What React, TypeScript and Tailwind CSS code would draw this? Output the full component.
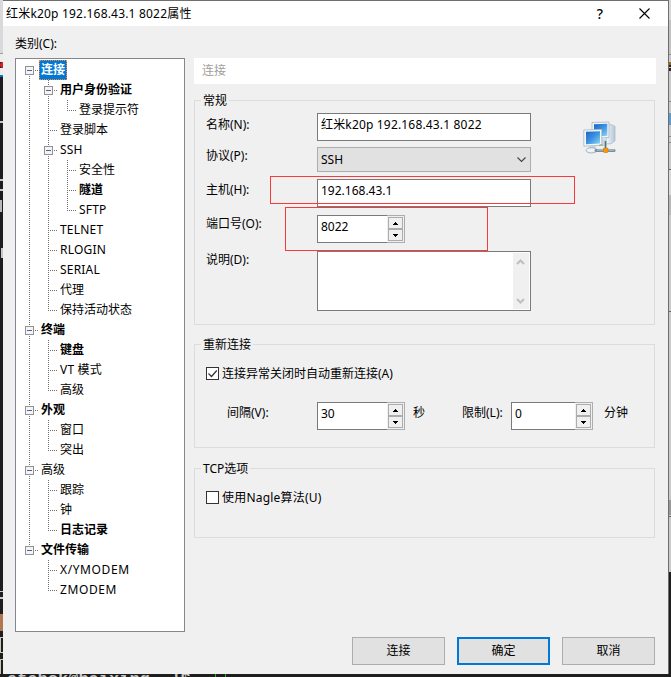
import { useState } from "react";
import type { ReactNode } from "react";
import clsx from "clsx";

type TreeItem = {
  label: string;
  bold?: boolean;
  wide?: boolean;
  children?: TreeItem[];
};

const CATEGORIES: TreeItem[] = [
  {
    label: "连接",
    children: [
      { label: "用户身份验证", bold: true, children: [{ label: "登录提示符" }] },
      { label: "登录脚本" },
      { label: "SSH", children: [{ label: "安全性" }, { label: "隧道", bold: true }, { label: "SFTP" }] },
      { label: "TELNET" },
      { label: "RLOGIN" },
      { label: "SERIAL" },
      { label: "代理" },
      { label: "保持活动状态" },
    ],
  },
  {
    label: "终端",
    bold: true,
    children: [{ label: "键盘", bold: true }, { label: "VT 模式" }, { label: "高级" }],
  },
  { label: "外观", bold: true, children: [{ label: "窗口" }, { label: "突出" }] },
  { label: "高级", children: [{ label: "跟踪" }, { label: "钟" }, { label: "日志记录", bold: true }] },
  {
    label: "文件传输",
    bold: true,
    children: [
      { label: "X/YMODEM", wide: true },
      { label: "ZMODEM", wide: true },
    ],
  },
];

type GuideProps = {
  up?: boolean;
  down?: boolean;
  branch?: boolean;
  box?: boolean;
};

// one 19px wide column of dotted tree lines
function Guide({ up, down, branch, box }: GuideProps) {
  return (
    <svg width="19" height="20" className="shrink-0" shapeRendering="crispEdges">
      <g stroke="#707070" strokeDasharray="1 1">
        {up && <path d="M9.5 0V11" />}
        {down && <path d="M9.5 10V20" />}
        {branch && <path d="M9 10.5H19" />}
      </g>
      {box && (
        <>
          <rect x="5.5" y="6.5" width="8" height="8" fill="#f4f4f4" stroke="#919191" />
          <path d="M7 10.5H12" stroke="#4b63a7" />
        </>
      )}
    </svg>
  );
}

function TreeRows({ items, trail = [] }: { items: TreeItem[]; trail?: boolean[] }) {
  return (
    <>
      {items.map((item, i) => {
        const last = i === items.length - 1;
        const selected = trail.length === 0 && i === 0;
        return (
          <div key={item.label}>
            <div className="flex h-5 items-center">
              {trail.map((open, n) => (
                <Guide key={n} up={open} down={open} />
              ))}
              <Guide up={trail.length > 0 || i > 0} down={!last} branch box={!!item.children} />
              <span
                className={clsx(
                  "h-5 leading-5",
                  selected ? "border border-dotted border-[#ff8728] bg-[#0078d7] px-px leading-[18px] text-white" : "pl-[2px]",
                  (item.bold || selected) && "font-bold",
                  item.wide ? "tracking-[0.6px]" : /^[A-Z]/.test(item.label) && "tracking-[0.2px]",
                )}
              >
                {item.label}
              </span>
            </div>
            {item.children && <TreeRows items={item.children} trail={[...trail, !last]} />}
          </div>
        );
      })}
    </>
  );
}

function Group({ title, className, children }: { title: string; className?: string; children: ReactNode }) {
  return (
    <section className={clsx("w-[461px] border border-[#dcdcdc]", className)}>
      <h2 className="-mt-[9px] ml-[6px] h-4 w-fit bg-[#f0f0f0] px-[2px] leading-[18px]">{title}</h2>
      {children}
    </section>
  );
}

function Spinner({ value, className }: { value: string; className: string }) {
  return (
    <div className={clsx("flex h-7 border border-[#abadb3] bg-[#f0f0f0]", className)}>
      <span className="-my-px -ml-px flex-1 border-y border-l border-[#7a7a7a] bg-white pl-[3px] leading-[21px]">{value}</span>
      <span className="flex w-[17px] flex-col py-px pl-px pr-px">
        <button className="grid flex-1 place-items-center border border-[#acacac]">
          <svg width="5" height="3" shapeRendering="crispEdges">
            <path d="M2 0h1v1h1v1h1v1H0V2h1V1h1z" />
          </svg>
        </button>
        <button className="grid flex-1 place-items-center border border-[#acacac]">
          <svg width="5" height="3" shapeRendering="crispEdges">
            <path d="M0 0h5v1H4v1H3v1H2V2H1V1H0z" />
          </svg>
        </button>
      </span>
    </div>
  );
}

function Checkbox({ checked, onChange, children }: { checked: boolean; onChange: () => void; children: ReactNode }) {
  return (
    <button role="checkbox" aria-checked={checked} onClick={onChange} className="flex h-[15px] items-center gap-[3px]">
      <svg width="13" height="13">
        <rect x=".5" y=".5" width="12" height="12" fill="#fff" stroke="#333" />
        {checked && <path d="M2.5 6.5l3 3 5.3-6" fill="none" stroke="#333" strokeWidth="1.2" />}
      </svg>
      <span className="leading-4">{children}</span>
    </button>
  );
}

function NetworkIcon() {
  return (
    <svg width="33" height="33" viewBox="0 0 33 33">
      <defs>
        <linearGradient id="screen" x1="0" y1="0" x2="1" y2="1">
          <stop offset="0" stopColor="#1d62c4" />
          <stop offset=".5" stopColor="#3d93e2" />
          <stop offset="1" stopColor="#8fd4f7" />
        </linearGradient>
        <linearGradient id="tower" x1="0" x2="1">
          <stop offset="0" stopColor="#fafcfd" />
          <stop offset="1" stopColor="#b3c5d5" />
        </linearGradient>
      </defs>
      <path d="M25 4.500l3-1 4 1.800v14.500l-4 3h-5z" fill="url(#tower)" stroke="#a9bccb" strokeWidth=".8" />
      <path d="M28.500 7v13" stroke="#c8d6e0" strokeWidth=".8" />
      <path d="M9 1.500l17-.5v15.500l-17 1z" fill="#f1f6f9" stroke="#a3b6c4" strokeWidth=".8" />
      <path d="M11 3.200l13.300-.4v12l-13.300.6z" fill="url(#screen)" />
      <path d="M18 18h6v7h-6z" fill="#cbd9e2" />
      <path d="M.8 9l18-.6v15.800L.8 25.200z" fill="#f4f8fa" stroke="#a3b6c4" strokeWidth=".8" />
      <path d="M3 10.800l14-.5v12.200l-14 .7z" fill="url(#screen)" />
      <path d="M6.500 25h6l1 3h-8z" fill="#c6d4dd" />
      <ellipse cx="8.500" cy="29.300" rx="5.500" ry="2.600" fill="#eef3f6" stroke="#a0b1bd" />
      <path d="M13 29.500h18" stroke="#76909f" strokeWidth="3" strokeLinecap="round" />
      <path d="M14 29h17" stroke="#c3d1d9" />
      <path d="M22.500 20v7" stroke="#527386" strokeWidth="1.600" />
      <path d="M16 24.500l3-1 1 1.500" fill="none" stroke="#89b06a" />
      <rect x="20.500" y="27" width="4.500" height="4.500" rx=".8" fill="#f59a0c" stroke="#c87404" strokeWidth=".6" />
    </svg>
  );
}

function LeftBackdrop() {
  return (
    <div className="flex w-[3px] shrink-0 flex-col bg-[#1e1e1e]">
      <div className="h-[54px] bg-[#d9d9d9]" />
      <div className="h-px bg-[#a0a0a0]" />
      <div className="h-[9px] bg-[#ececec]" />
      <div className="h-[6px] rounded-l bg-[#d5222a]" />
      <div className="h-[7px] bg-[#ececec]" />
      <div className="h-[2px] bg-[#0078d7]" />
      <div className="mt-[44px] h-[2px] bg-[#c8c8c8]" />
      <div className="mt-[56px] h-[2px] bg-[#c8c8c8]" />
      <div className="mt-[8px] h-[2px] bg-[#c8c8c8]" />
      <div className="mt-[9px] h-[12px] w-[2px] bg-[#b8b8b8]" />
      <div className="mt-[36px] ml-px h-[11px] w-[2px] bg-[#c8c8c8]" />
      <div className="mt-[333px] h-px bg-[#c8c8c8]" />
      <div className="mt-[5px] h-[2px] bg-[#c8c8c8]" />
      <div className="mt-[15px] h-[17px] bg-[#b07850]" />
      <div className="mt-[6px] h-[17px] border-y border-l border-[#c8c8b8]" />
      <div className="mt-[6px] h-[15px] border-t border-l border-[#c8c8b8]" />
    </div>
  );
}

function RightBackdrop() {
  return (
    <div className="flex w-[3px] shrink-0 flex-col border-l border-[#6e6e6e] bg-[#cacaca]">
      <div className="h-[20px] bg-[#d6d6d6]" />
      <div className="h-[34px] bg-[#c2c2c2]" />
      <div className="h-px bg-[#8c8c8c]" />
      <div className="mt-[7px] h-[3px] bg-[#8a6a20]" />
      <div className="h-[2px] bg-[#222]" />
      <div className="mt-px h-[3px] bg-[#33202c]" />
      <div className="mt-[30px] h-px bg-[#8c8c8c]" />
      <div className="mt-[11px] h-[12px] bg-[#5f9cc5]" />
      <div className="mt-[11px] h-px bg-[#8c8c8c]" />
      <div className="mt-[5px] h-px bg-[#8c8c8c]" />
      <div className="mt-[26px] h-px bg-[#666]" />
      <div className="h-[25px] bg-[#dadada]" />
      <div className="h-[20px] bg-[#b8b8b8]" />
      <div className="mt-[96px] h-px bg-[#666]" />
      <div className="mt-[188px] h-[15px] bg-[#999]" />
      <div className="mt-px h-px bg-[#666]" />
      <div className="mt-[55px] flex-1 bg-[#1e1e1e]" />
    </div>
  );
}

export default function App() {
  const [reconnect, setReconnect] = useState(true);
  const [nagle, setNagle] = useState(false);

  return (
    <div className="h-[677px] w-[671px] overflow-hidden bg-[#1e1e1e] font-['Noto_Sans','Noto_Sans_CJK_SC',sans-serif] text-[12px] text-black">
      <div className="flex h-[674px]">
        <LeftBackdrop />
        <main className="flex w-[665px] flex-col border-t border-[#6e6e6e] bg-[#f0f0f0]">
          <header className="flex h-[25px] items-center bg-white pl-[3px]">
            <h1 className="flex-1 leading-6 tracking-[0.19px]">红米k20p 192.168.43.1 8022属性</h1>
            <button className="mr-[36px] text-[14px] font-medium leading-6">?</button>
            <button aria-label="关闭" className="mr-[18px]">
              <svg width="11" height="11" stroke="#000" strokeWidth="1.1">
                <path d="M.5.5l10 10M10.500.5l-10 10" />
              </svg>
            </button>
          </header>

          <p className="mt-[8px] ml-3 h-5 leading-5">类别(C):</p>

          <div className="mt-1 ml-3 flex">
            <nav className="h-[574px] w-[170px] border border-[#828790] bg-white pt-px pl-1">
              <TreeRows items={CATEGORIES} />
            </nav>

            <div className="ml-[9px] w-[462px]">
              <div className="h-[26px] bg-white pl-2 leading-[25px] text-[#a0a0a0]">连接</div>

              <Group title="常规" className="mt-4 h-[225px]">
                <div className="flex">
                  <div className="w-[336px] shrink-0">
                    <div className="mt-[5px] flex h-7">
                      <span className="w-[122px] pl-[11px] leading-6">名称(N):</span>
                      <span className="flex-1 border border-[#7a7a7a] bg-white pl-[3px] leading-[21px] tracking-[0.17px]">
                        红米k20p 192.168.43.1 8022
                      </span>
                    </div>
                    <div className="mt-[6px] flex h-[25px]">
                      <span className="w-[122px] pl-[11px] leading-[18px]">协议(P):</span>
                      <button className="flex flex-1 items-center justify-between border border-[#adadad] bg-[#e1e1e1] pr-1 pl-[3px]">
                        SSH
                        <svg width="9" height="6" fill="none" stroke="#444" strokeWidth="1.1">
                          <path d="M.5.5l4 4 4-4" />
                        </svg>
                      </button>
                    </div>
                    <div className="relative mt-[7px] flex h-7">
                      <span className="w-[122px] pl-[11px] leading-[22px]">主机(H):</span>
                      <span className="flex-1 border border-[#7a7a7a] bg-white pl-[3px] leading-[22px]">192.168.43.1</span>
                      <i className="absolute -top-[3px] left-[75px] h-7 w-[305px] border border-[#f53b3b]" />
                    </div>
                    <div className="relative mt-2 flex h-7">
                      <span className="w-[122px] pl-[11px] leading-[18px]">端口号(O):</span>
                      <Spinner value="8022" className="w-[88px]" />
                      <i className="absolute -top-2 left-[90px] h-11 w-[203px] border border-[#f53b3b]" />
                    </div>
                    <div className="mt-2 flex h-[60px]">
                      <span className="w-[122px] pl-[11px] leading-[18px]">说明(D):</span>
                      <div className="flex flex-1 justify-end border border-[#7a7a7a] bg-white p-px">
                        <div className="flex w-4 flex-col items-center justify-between bg-[#f0f0f0] pt-[6px] pr-px pb-[5px]">
                          <svg width="9" height="6" fill="none" stroke="#bfbfbf" strokeWidth="2">
                            <path d="M1 5l3.500-3.500L8 5" />
                          </svg>
                          <svg width="9" height="6" fill="none" stroke="#bfbfbf" strokeWidth="2">
                            <path d="M1 1l3.500 3.500L8 1" />
                          </svg>
                        </div>
                      </div>
                    </div>
                  </div>
                  <div className="mt-[13px] ml-[52px]">
                    <NetworkIcon />
                  </div>
                </div>
              </Group>

              <Group title="重新连接" className="mt-[19px] h-[104px]">
                <div className="mt-[14px] ml-[11px]">
                  <Checkbox checked={reconnect} onChange={() => setReconnect(!reconnect)}>
                    连接异常关闭时自动重新连接(A)
                  </Checkbox>
                </div>
                <div className="mt-[21px] flex h-7 leading-[22px]">
                  <span className="w-[122px] pl-8">间隔(V):</span>
                  <Spinner value="30" className="w-[88px]" />
                  <span className="w-[49px] pl-2">秒</span>
                  <span className="w-[57px] pl-2">限制(L):</span>
                  <Spinner value="0" className="w-[82px]" />
                  <span className="pl-[11px]">分钟</span>
                </div>
              </Group>

              <Group title="TCP选项" className="mt-5 h-[70px]">
                <div className="mt-[14px] ml-[11px] tracking-[0.2px]">
                  <Checkbox checked={nagle} onChange={() => setNagle(!nagle)}>
                    使用Nagle算法(U)
                  </Checkbox>
                </div>
              </Group>
            </div>
          </div>

          <footer className="mt-[5px] mr-[13px] flex justify-end gap-3">
            <button className="h-7 w-[93px] border border-[#adadad] bg-[#e1e1e1]">连接</button>
            <button className="h-7 w-[93px] border-2 border-[#0078d7] bg-[#e1e1e1]">确定</button>
            <button className="h-7 w-[93px] border border-[#adadad] bg-[#e1e1e1]">取消</button>
          </footer>
        </main>
        <RightBackdrop />
      </div>
      <div className="flex h-[3px] overflow-hidden pl-[7px] font-['Liberation_Mono',monospace] text-[17px] leading-[12px] font-bold text-[#c8c8c8]">
        <span className="w-[208px]">etabok@baixing ~]$</span>
        <span className="flex gap-[9px]">
          <i className="w-px bg-[#22b422]" />
          <i className="w-px bg-[#22b422]" />
        </span>
      </div>
    </div>
  );
}
